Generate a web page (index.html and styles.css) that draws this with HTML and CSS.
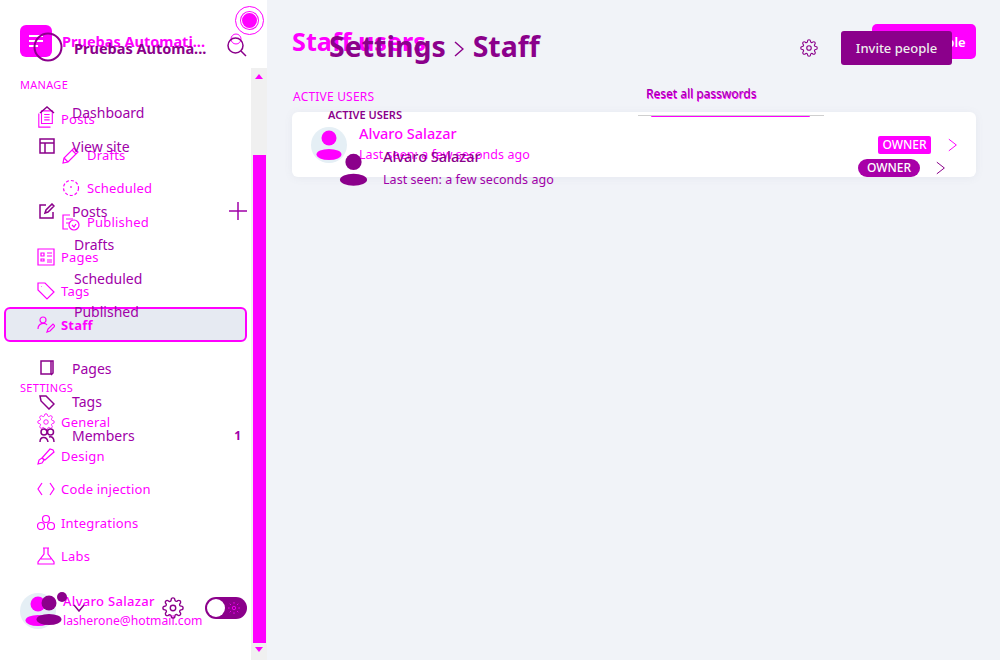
FILE: index.html
```html
<!DOCTYPE html>
<html lang="en">
<head>
    <meta charset="UTF-8">
    <meta name="viewport" content="width=device-width, initial-scale=1.0">
    <title>Staff users</title>
    <link rel="stylesheet" href="styles.css">
</head>
<body>
    <svg class="defs" width="0" height="0">
        <symbol id="gear" viewBox="0 0 24 24">
            <circle cx="12" cy="12" r="3"/>
            <path d="M19.4 15a1.65 1.65 0 0 0 .33 1.82l.06.06a2 2 0 0 1 0 2.83 2 2 0 0 1-2.83 0l-.06-.06a1.65 1.65 0 0 0-1.82-.33 1.65 1.65 0 0 0-1 1.51V21a2 2 0 0 1-2 2 2 2 0 0 1-2-2v-.09A1.65 1.65 0 0 0 9 19.4a1.65 1.65 0 0 0-1.82.33l-.06.06a2 2 0 0 1-2.83 0 2 2 0 0 1 0-2.83l.06-.06a1.65 1.65 0 0 0 .33-1.82 1.65 1.65 0 0 0-1.51-1H3a2 2 0 0 1-2-2 2 2 0 0 1 2-2h.09A1.65 1.65 0 0 0 4.6 9a1.65 1.65 0 0 0-.33-1.82l-.06-.06a2 2 0 0 1 0-2.83 2 2 0 0 1 2.83 0l.06.06a1.65 1.65 0 0 0 1.82.33H9a1.65 1.65 0 0 0 1-1.51V3a2 2 0 0 1 2-2 2 2 0 0 1 2 2v.09a1.65 1.65 0 0 0 1 1.51 1.65 1.65 0 0 0 1.82-.33l.06-.06a2 2 0 0 1 2.83 0 2 2 0 0 1 0 2.83l-.06.06a1.65 1.65 0 0 0-.33 1.82V9a1.65 1.65 0 0 0 1.51 1H21a2 2 0 0 1 2 2 2 2 0 0 1-2 2h-.09a1.65 1.65 0 0 0-1.51 1z"/>
        </symbol>
        <symbol id="person" viewBox="0 0 36 36">
            <circle class="solid" cx="18" cy="11" r="7.5"/>
            <ellipse class="solid" cx="18" cy="27.5" rx="12.5" ry="5.5"/>
        </symbol>
    </svg>

    <div class="stage">
        <div class="layer layer-pink">
            <aside class="side">
                <div class="side-body">
                    <div class="side-head">
                        <span class="logo">
                            <svg viewBox="0 0 32 32" width="32" height="32"><path class="white-line" d="M9 11h14M9 16h14M9 21h9"/></svg>
                        </span>
                        <span class="site-name">Pruebas Automati...</span>
                        <svg class="faint-search" viewBox="0 0 14 12"><circle cx="7" cy="6" r="5"/></svg>
                    </div>
                    <h3 class="side-label">Manage</h3>
                    <nav class="nav">
                        <a class="nav-row">
                            <svg class="ico" viewBox="0 0 18 20"><path d="M4 1h12v14H4zM1 4v15h13M7 5h6M7 8h6M7 11h6"/></svg>
                            <span>Posts</span>
                        </a>
                        <a class="nav-row sub first-sub">
                            <svg class="ico" viewBox="0 0 18 18"><path d="M1 17l1-5L12 2l4 4L6 16zM2 12l4 4M10 4l4 4"/></svg>
                            <span>Drafts</span>
                        </a>
                        <a class="nav-row sub">
                            <svg class="ico" viewBox="0 0 18 18"><circle cx="9" cy="9" r="7.5" stroke-dasharray="3 2"/><path d="M9 9V7"/></svg>
                            <span>Scheduled</span>
                        </a>
                        <a class="nav-row sub">
                            <svg class="ico" viewBox="0 0 18 18"><path d="M8 2H1v14h5M4 6h7M4 10h3"/><circle cx="12" cy="12" r="5"/><path d="M10 12l2 2 2-3"/></svg>
                            <span>Published</span>
                        </a>
                        <a class="nav-row after-sub">
                            <svg class="ico" viewBox="0 0 18 18"><path d="M1 1h16v16H1zM4 5h3v3H4zM4 11h3v2H4zM10 5h5M10 8h5M10 12h5M10 14h5"/></svg>
                            <span>Pages</span>
                        </a>
                        <a class="nav-row">
                            <svg class="ico" viewBox="0 0 18 18"><path d="M1 1h7l9 9-7 7-9-9zM4.500 4.500h.5"/></svg>
                            <span>Tags</span>
                        </a>
                        <a class="nav-row active">
                            <svg class="ico" viewBox="0 0 18 18"><circle cx="6" cy="4" r="3"/><path d="M1 13c0-6 7-7 9-4M10 16l1-3 5-5 2 2-5 5z"/></svg>
                            <span>Staff</span>
                        </a>
                    </nav>
                    <h3 class="side-label settings-label">Settings</h3>
                    <nav class="nav">
                        <a class="nav-row">
                            <svg class="ico" viewBox="0 0 24 24"><use href="#gear"/></svg>
                            <span>General</span>
                        </a>
                        <a class="nav-row">
                            <svg class="ico" viewBox="0 0 18 18"><path d="M1 17l1-4 3-2 2 2-2 3zM5 11l8-9 3 1 1 2-9 8z"/></svg>
                            <span>Design</span>
                        </a>
                        <a class="nav-row">
                            <svg class="ico" viewBox="0 0 18 18"><path d="M5 3L1 9l4 6M13 3l4 6-4 6"/></svg>
                            <span>Code injection</span>
                        </a>
                        <a class="nav-row">
                            <svg class="ico" viewBox="0 0 18 18"><circle cx="9" cy="5" r="3.500"/><circle cx="4" cy="12" r="3.500"/><circle cx="14" cy="12" r="3.500"/></svg>
                            <span>Integrations</span>
                        </a>
                        <a class="nav-row">
                            <svg class="ico" viewBox="0 0 18 18"><path d="M6 1h6M7 1v6L1 15v2h16v-2l-6-8V1M4 12h10"/></svg>
                            <span>Labs</span>
                        </a>
                    </nav>
                    <div class="me">
                        <span class="avatar"><svg viewBox="0 0 36 36" width="36" height="36"><use href="#person"/></svg></span>
                        <div class="me-text">
                            <div class="me-name">Alvaro Salazar</div>
                            <div class="me-mail">lasherone@hotmail.com</div>
                        </div>
                    </div>
                </div>
                <div class="scroll">
                    <span class="arrow-up"></span>
                    <span class="thumb"></span>
                    <span class="arrow-down"></span>
                </div>
                <span class="cursor-ring"><span class="cursor-dot"></span></span>
            </aside>
            <main class="main">
                <header class="page-head">
                    <h1 class="page-title">Staff users</h1>
                    <button class="btn">Invite people</button>
                </header>
                <div class="group-row">
                    <h4 class="group-label">Active users</h4>
                    <a class="reset-link">Reset all passwords</a>
                </div>
                <section class="card">
                    <span class="card-edge"></span>
                    <span class="avatar"><svg viewBox="0 0 36 36" width="36" height="36"><use href="#person"/></svg></span>
                    <div class="user-text">
                        <div class="user-name">Alvaro Salazar</div>
                        <div class="user-seen">Last seen: a few seconds ago</div>
                    </div>
                    <span class="badge">OWNER</span>
                    <svg class="chev" viewBox="0 0 12 16"><path d="M1 1l9 7-9 7"/></svg>
                </section>
            </main>
        </div>

        <div class="layer layer-purple">
            <aside class="side2">
                <div class="side2-head">
                    <svg class="ring" viewBox="0 0 30 30"><circle cx="15" cy="15" r="13.500"/></svg>
                    <span class="site-name2">Pruebas Automa...</span>
                    <svg class="search" viewBox="0 0 20 20"><circle cx="8.500" cy="8.500" r="7.500"/><path d="M14 14l5 5"/></svg>
                </div>
                <nav class="nav2">
                    <a class="row2">
                        <svg class="ico2" viewBox="0 0 16 16"><path d="M1 8l7-6 7 6"/></svg>
                        <span>Dashboard</span>
                    </a>
                    <a class="row2">
                        <svg class="ico2" viewBox="0 0 16 16"><path d="M1 1h14v14H1zM1 5h14M6 5v10"/></svg>
                        <span>View site</span>
                    </a>
                    <a class="row2 posts-row">
                        <svg class="ico2" viewBox="0 0 16 16"><path d="M7 2H1v13h13V9M6 10l1-3 6-6 2 2-6 6z"/></svg>
                        <span>Posts</span>
                        <svg class="plus" viewBox="0 0 18 18"><path d="M9 0v18M0 9h18"/></svg>
                    </a>
                    <a class="row2 sub2">Drafts</a>
                    <a class="row2 sub2">Scheduled</a>
                    <a class="row2 sub2">Published</a>
                    <a class="row2 pages-row">
                        <svg class="ico2" viewBox="0 0 16 16"><path d="M2 1h10v13H2zM12 1h2v12l-2 2"/></svg>
                        <span>Pages</span>
                    </a>
                    <a class="row2">
                        <svg class="ico2" viewBox="0 0 16 16"><path d="M1 2h6l8 8-5 5-8-8z"/></svg>
                        <span>Tags</span>
                    </a>
                    <a class="row2">
                        <svg class="ico2" viewBox="0 0 16 16"><circle cx="5" cy="5" r="3"/><circle cx="11.500" cy="5" r="3"/><path d="M1 15c0-6 7-6 8 0M10 10c3-1 5 1 5 5"/></svg>
                        <span>Members</span>
                        <b class="count">1</b>
                    </a>
                </nav>
                <div class="side2-foot">
                    <span class="me2">
                        <svg viewBox="0 0 36 36" width="36" height="36"><use href="#person"/></svg>
                        <span class="dot"></span>
                    </span>
                    <svg class="caret" viewBox="0 0 12 8"><path d="M1 1l5 6 5-6"/></svg>
                    <svg class="foot-gear" viewBox="0 0 24 24"><use href="#gear"/></svg>
                    <span class="toggle">
                        <span class="knob"></span>
                        <svg class="sun" viewBox="0 0 14 14"><circle cx="7" cy="7" r="2"/><path d="M7 0v2M7 12v2M0 7h2M12 7h2M2 2l1.500 1.500M10.500 10.500L12 12M2 12l1.500-1.500M10.500 3.500L12 2"/></svg>
                    </span>
                </div>
            </aside>
            <main class="main2">
                <header class="head2">
                    <h1 class="title2">Settings <svg class="crumb" viewBox="0 0 10 16"><path d="M1 1l8 7-8 7"/></svg> Staff</h1>
                    <svg class="head-gear" viewBox="0 0 24 24"><use href="#gear"/></svg>
                    <button class="btn2">Invite people</button>
                </header>
                <a class="reset2">Reset all passwords</a>
                <div class="users-head">
                    <h4 class="label2">Active users</h4>
                    <span class="rule"></span>
                </div>
                <section class="user2">
                    <svg class="person2" viewBox="0 0 36 36"><use href="#person"/></svg>
                    <div class="user2-text">
                        <div class="name2">Alvaro Salazar</div>
                        <div class="seen2">Last seen: a few seconds ago</div>
                    </div>
                    <span class="pill">OWNER</span>
                    <svg class="chev2" viewBox="0 0 12 16"><path d="M1 1l9 7-9 7"/></svg>
                </section>
            </main>
        </div>
    </div>
</body>
</html>
```

FILE: styles.css
```css
* {
    box-sizing: border-box;
}
body {
    margin: 0;
    font-family: "Noto Sans", sans-serif;
    overflow: hidden;
}
h1, h3, h4 {
    margin: 0;
}
.defs {
    display: block;
}
.stage {
    display: grid;
    width: 1000px;
    height: 660px;
    overflow: hidden;
}
.layer {
    position: relative;
    grid-area: 1 / 1;
    display: flex;
    height: 660px;
    min-width: 0;
}
svg {
    flex: none;
    fill: none;
    stroke: currentColor;
    stroke-width: 1.5;
}
.solid {
    fill: currentColor;
    stroke: none;
}

/* pink layer */
.layer-pink {
    z-index: 1;
    color: #ff00ff;
}
.side {
    position: relative;
    display: flex;
    width: 267px;
    flex: none;
    background-color: #fff;
}
.side-body {
    width: 251px;
    flex: none;
}
.side-head {
    display: flex;
    align-items: flex-start;
    height: 76px;
    padding: 25px 0 0 20px;
}
.logo {
    width: 32px;
    height: 32px;
    border-radius: 6px;
    background-color: #ff00ff;
}
.white-line {
    stroke: #fff;
    stroke-width: 2;
}
.site-name {
    margin: 6px 0 0 10px;
    font-size: 14.500px;
    line-height: 20px;
    font-weight: 700;
    white-space: nowrap;
}
.faint-search {
    width: 14px;
    height: 12px;
    margin: 8px 0 0 24px;
    stroke-width: 1;
}
.side-label {
    padding-left: 20px;
    font-size: 11px;
    line-height: 18px;
    font-weight: 400;
    letter-spacing: 0.3px;
    text-transform: uppercase;
}
.nav {
    display: flex;
    flex-direction: column;
}
.side-label + .nav {
    margin-top: 8px;
}
.nav-row {
    display: flex;
    align-items: center;
    height: 33.500px;
    padding-left: 37px;
    font-size: 13px;
    letter-spacing: 0.2px;
}
.ico {
    width: 18px;
    height: 18px;
    margin-right: 6px;
    stroke-width: 1.200;
}
.sub {
    padding-left: 62px;
}
.sub .ico {
    margin-right: 7px;
}
.first-sub {
    margin-top: 2.500px;
}
.after-sub {
    margin-top: 2px;
}
.active {
    height: 35px;
    margin: -0.500px 4px 0 4px;
    padding-left: 31px;
    border: 2px solid #ff00ff;
    border-radius: 6px;
    background-color: #e6eaf2;
    font-weight: 700;
}
.settings-label {
    margin-top: 36.500px;
}
.settings-label + .nav {
    margin-top: 9px;
}
.me {
    display: flex;
    align-items: flex-start;
    margin-top: 20px;
    padding-left: 20px;
}
.avatar {
    display: block;
    width: 36px;
    height: 36px;
    flex: none;
    border-radius: 50%;
    background-color: #e5eff5;
}
.avatar svg {
    display: block;
}
.me-text {
    margin: -1px 0 0 7px;
}
.me-name {
    font-size: 13px;
    line-height: 19px;
    font-weight: 500;
    letter-spacing: 0.3px;
}
.me-mail {
    font-size: 12.200px;
    line-height: 19px;
    white-space: nowrap;
}
.scroll {
    display: flex;
    flex-direction: column;
    align-items: center;
    width: 16px;
    height: 592px;
    margin-top: 68px;
    padding-top: 6px;
    background-color: #f0f0f0;
}
.arrow-up {
    border: 4px solid transparent;
    border-top: 0;
    border-bottom: 5px solid #ff00ff;
}
.arrow-down {
    margin-top: 4px;
    border: 4px solid transparent;
    border-bottom: 0;
    border-top: 5px solid #ff00ff;
}
.thumb {
    width: 13px;
    height: 488px;
    margin-top: 76px;
    background-color: #ff00ff;
}
.cursor-ring {
    position: absolute;
    left: 235px;
    top: 6px;
    display: flex;
    align-items: center;
    justify-content: center;
    width: 29px;
    height: 29px;
    border: 1px solid #ff00ff;
    border-radius: 50%;
}
.cursor-dot {
    width: 15px;
    height: 15px;
    border-radius: 50%;
    background-color: #ff00ff;
    box-shadow: 0 0 0 1px #fff, 0 0 0 2px #ff00ff;
}
.main {
    flex: 1;
    padding: 24px 24px 0 25px;
    background-color: #f1f3f8;
}
.page-head {
    display: flex;
    align-items: center;
    justify-content: space-between;
    height: 35px;
}
.page-title {
    margin-top: -2px;
    font-size: 25.200px;
    font-weight: 700;
}
.btn {
    width: 104px;
    height: 35px;
    border: 0;
    border-radius: 5px;
    background-color: #ff00ff;
    color: #fff;
    font-family: inherit;
    font-size: 13px;
    font-weight: 600;
}
.group-row {
    display: flex;
    align-items: center;
    justify-content: space-between;
    height: 18px;
    margin-top: 28px;
    padding-right: 219px;
}
.group-label {
    padding-left: 1px;
    font-size: 12px;
    font-weight: 400;
    letter-spacing: 0.2px;
    text-transform: uppercase;
}
.reset-link {
    margin-top: -4px;
    font-size: 12px;
}
.card {
    position: relative;
    display: flex;
    align-items: center;
    height: 65px;
    margin-top: 7px;
    padding: 0 18px 0 19px;
    border-radius: 6px;
    background-color: #fff;
    box-shadow: 0 1px 8px rgba(100, 110, 140, 0.08);
}
.card-edge {
    position: absolute;
    left: 359px;
    top: 3px;
    width: 159px;
    height: 2px;
    border-radius: 1px;
    background-color: #ff00ff;
}
.user-text {
    margin: -2px 0 0 12px;
}
.user-name {
    font-size: 14.500px;
    line-height: 21px;
    font-weight: 500;
}
.user-seen {
    font-size: 12.500px;
    line-height: 21px;
    letter-spacing: 0.04px;
}
.badge {
    margin-left: auto;
    width: 53px;
    height: 18px;
    border-radius: 2px;
    background-color: #ff00ff;
    color: #fff;
    font-size: 12px;
    line-height: 18px;
    font-weight: 500;
    text-align: center;
}
.chev {
    width: 10px;
    height: 14px;
    margin-left: 17px;
    stroke-width: 1.200;
}

/* purple layer */
.layer-purple {
    z-index: 2;
    color: #8b008b;
}
.side2 {
    width: 267px;
    flex: none;
}
.side2-head {
    display: flex;
    align-items: center;
    height: 60px;
    padding: 34px 0 0 33px;
}
.ring {
    width: 30px;
    height: 30px;
    stroke-width: 2;
}
.site-name2 {
    margin: 1px 0 0 11px;
    font-size: 14.500px;
    font-weight: 700;
    white-space: nowrap;
}
.search {
    width: 20px;
    height: 20px;
    margin-left: auto;
    margin-right: 20px;
}
.nav2 {
    display: flex;
    flex-direction: column;
    margin-top: 36px;
}
.row2 {
    display: flex;
    align-items: center;
    height: 33.500px;
    padding-left: 39px;
    color: #a000a8;
    font-size: 14px;
}
.ico2 {
    width: 16px;
    height: 16px;
    margin-right: 17px;
    color: #8b008b;
}
.posts-row {
    margin-top: 31.500px;
}
.pages-row {
    margin-top: 23px;
}
.plus {
    width: 18px;
    height: 18px;
    margin-left: auto;
    margin-right: 20px;
}
.sub2 {
    padding-left: 74px;
}
.count {
    margin-left: auto;
    margin-right: 26px;
    font-size: 12px;
}
.side2-foot {
    display: flex;
    align-items: center;
    margin-top: 138px;
    padding-left: 31px;
}
.me2 {
    position: relative;
    display: block;
    width: 36px;
    height: 36px;
}
.me2 svg {
    display: block;
    margin-top: 2px;
}
.dot {
    position: absolute;
    left: 26px;
    top: 2px;
    width: 10px;
    height: 10px;
    border-radius: 50%;
    background-color: #8b008b;
}
.caret {
    width: 12px;
    height: 8px;
    margin: 0 0 0 6px;
}
.foot-gear {
    width: 22px;
    height: 22px;
    margin-left: 77px;
}
.toggle {
    display: flex;
    align-items: center;
    justify-content: space-between;
    width: 42px;
    height: 22px;
    margin-left: 21px;
    padding: 0 7px 0 2px;
    border-radius: 11px;
    background-color: #8b008b;
}
.knob {
    width: 18px;
    height: 18px;
    border-radius: 50%;
    background-color: #fff;
}
.sun {
    width: 12px;
    height: 12px;
    color: #ff00ff;
    stroke-width: 1;
}
.main2 {
    flex: 1;
    padding: 31px 0 0 62px;
}
.head2 {
    display: flex;
    align-items: center;
    height: 34px;
    padding-right: 48px;
}
.title2 {
    margin: -4px auto 0 0;
    font-size: 28.500px;
    font-weight: 700;
    white-space: nowrap;
}
.crumb {
    width: 10px;
    height: 16px;
    margin: 0 1px;
}
.head-gear {
    width: 18px;
    height: 18px;
    margin-right: 23px;
}
.btn2 {
    width: 111px;
    height: 34px;
    border: 0;
    border-radius: 3px;
    background-color: #8b008b;
    color: #eee;
    font-family: inherit;
    font-size: 13px;
    font-weight: 500;
}
.reset2 {
    display: block;
    margin: 20px 0 0 317px;
    color: #a000a8;
    font-size: 12px;
    line-height: 18px;
}
.users-head {
    display: flex;
    align-items: center;
    height: 16px;
    margin-top: -2px;
}
.label2 {
    margin: 11px 0 0 -1px;
    font-size: 11px;
    font-weight: 600;
    text-transform: uppercase;
}
.rule {
    width: 186px;
    height: 1px;
    margin: 12px 0 0 236px;
    background-color: #cfcfcf;
}
.user2 {
    display: flex;
    align-items: center;
    height: 46px;
    margin-top: 28px;
    padding: 0 54px 0 5px;
}
.person2 {
    width: 39px;
    height: 39px;
    margin-top: 3px;
}
.user2-text {
    margin-left: 10px;
}
.name2 {
    font-size: 14.500px;
    line-height: 23px;
    font-weight: 500;
}
.seen2 {
    color: #a000a8;
    font-size: 12.500px;
    line-height: 23px;
    letter-spacing: 0.04px;
}
.pill {
    margin-left: auto;
    width: 62px;
    height: 18px;
    border-radius: 9px;
    background-color: #a800a8;
    color: #fff;
    font-size: 12px;
    line-height: 18px;
    font-weight: 500;
    text-align: center;
}
.chev2 {
    width: 10px;
    height: 14px;
    margin-left: 16px;
    stroke-width: 1.200;
}
```
